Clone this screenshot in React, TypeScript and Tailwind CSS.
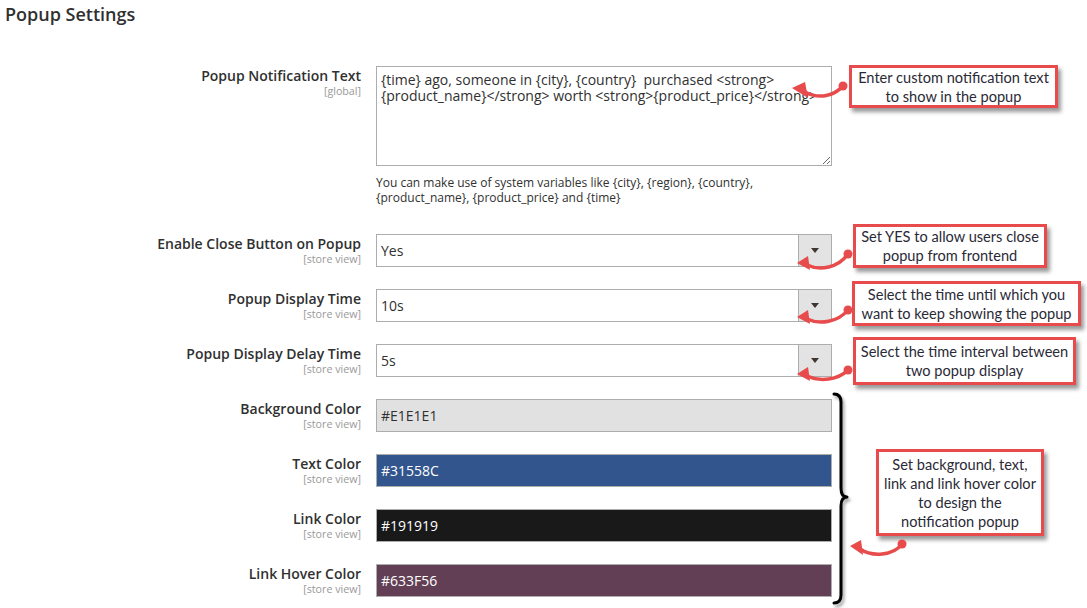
import React from "react";

interface IRowProps {
  title: string;
  scope: string;
  className?: string;
  children: React.ReactNode;
}

const Row: React.FC<IRowProps> = ({ title, scope, className, children }) => {
  return (
    <div className={"flex items-start " + (className ?? "")}>
      <div className="w-[361px] shrink-0 pt-px text-right">
        <div className="text-[14px] leading-[18px] font-semibold text-[#303030]">{title}</div>
        <div className="text-[10.7px] leading-[12px] text-[#999999]">{scope}</div>
      </div>
      <div className="ml-[15px] w-[456px]">{children}</div>
    </div>
  );
};

const Select: React.FC<{ value: string }> = ({ value }) => {
  return (
    <div className="flex h-[33px] w-full border border-[#adadad] bg-white">
      <div className="flex flex-1 items-center pl-[4px] text-[14px] leading-[18px] text-[#303030]">{value}</div>
      <div className="flex w-[33px] items-center justify-center border-l border-[#adadad] bg-[#e3e3e3]">
        <div className="h-0 w-0 border-x-[4px] border-t-[5px] border-x-transparent border-t-[#41362f]" />
      </div>
    </div>
  );
};

const Callout: React.FC<{ className: string; children: React.ReactNode }> = ({ className, children }) => {
  return (
    <div
      className={
        "absolute flex items-center justify-center border-[3px] border-[#e84b4b] bg-white text-center font-['Lato',sans-serif] text-[14.6px] leading-[19px] text-[#2a2a36] shadow-[3px_4px_4px_rgba(0,0,0,0.4)] " +
        className
      }
    >
      <div>{children}</div>
    </div>
  );
};

const RED = "#e84b4b";

const arrows = [
  { tip: "792,88 805,82 808,98", tail: "M805,92 C818,99 833,97 843,86", dot: [843, 86] },
  { tip: "797,263 808,256 810,270", tail: "M807,265 C820,271 838,268 848,254", dot: [848, 254] },
  { tip: "797,317 808,310 810,324", tail: "M807,319 C820,325 838,322 848,310", dot: [848, 310] },
  { tip: "797,374 808,367 810,381", tail: "M807,376 C820,382 838,380 848,370", dot: [848, 370] },
  { tip: "850,546 861,540 863,555", tail: "M860,549 C872,557 893,556 902,544", dot: [902, 544] },
];

export default function App() {
  return (
    <div className="relative h-[608px] w-[1087px] overflow-hidden bg-white font-['Open_Sans',sans-serif] text-[#303030]">
      <h1 className="pl-[5px] pt-[2px] text-[18px] leading-[24px] font-semibold text-[#303030]">Popup Settings</h1>

      <Row title="Popup Notification Text" scope="[global]" className="mt-[40px]">
        <textarea
          readOnly
          className="block h-[100px] w-full border border-[#adadad] px-[4px] pt-[5px] text-[14px] leading-[16px] text-[#303030] outline-none"
          value="{time} ago, someone in {city}, {country}  purchased <strong> {product_name}</strong> worth <strong>{product_price}</strong>"
        />
        <p className="mt-[9px] text-[12px] leading-[15px] text-[#303030]">
          You can make use of system variables like {"{city}"}, {"{region}"}, {"{country}"},
          <br />
          {"{product_name}"}, {"{product_price}"} and {"{time}"}
        </p>
      </Row>

      <Row title="Enable Close Button on Popup" scope="[store view]" className="mt-[29px]">
        <Select value="Yes" />
      </Row>
      <Row title="Popup Display Time" scope="[store view]" className="mt-[22px]">
        <Select value="10s" />
      </Row>
      <Row title="Popup Display Delay Time" scope="[store view]" className="mt-[22px]">
        <Select value="5s" />
      </Row>
      <Row title="Background Color" scope="[store view]" className="mt-[22px]">
        <div className="flex h-[33px] items-center border border-[#adadad] bg-[#E1E1E1] pl-[4px] text-[14px] text-[#303030]">#E1E1E1</div>
      </Row>
      <Row title="Text Color" scope="[store view]" className="mt-[22px]">
        <div className="flex h-[33px] items-center border border-[#adadad] bg-[#31558C] pl-[4px] text-[14px] text-white">#31558C</div>
      </Row>
      <Row title="Link Color" scope="[store view]" className="mt-[22px]">
        <div className="flex h-[33px] items-center border border-[#adadad] bg-[#191919] pl-[4px] text-[14px] text-white">#191919</div>
      </Row>
      <Row title="Link Hover Color" scope="[store view]" className="mt-[22px]">
        <div className="flex h-[33px] items-center border border-[#adadad] bg-[#633F56] pl-[4px] text-[14px] text-white">#633F56</div>
      </Row>

      {/* annotations */}
      <Callout className="left-[849px] top-[65px] h-[43px] w-[209px]">
        Enter custom notification text
        <br />
        to show in the popup
      </Callout>
      <Callout className="left-[853px] top-[224px] h-[44px] w-[194px]">
        Set YES to allow users close
        <br />
        popup from frontend
      </Callout>
      <Callout className="left-[852px] top-[281px] h-[45px] w-[229px]">
        Select the time until which you
        <br />
        want to keep showing the popup
      </Callout>
      <Callout className="left-[853px] top-[337px] h-[48px] w-[223px]">
        Select the time interval between
        <br />
        two popup display
      </Callout>
      <Callout className="left-[876px] top-[449px] h-[87px] w-[168px]">
        Set background, text,
        <br />
        link and link hover color
        <br />
        to design the
        <br />
        notification popup
      </Callout>

      <svg className="pointer-events-none absolute left-0 top-0" width="1087" height="608" viewBox="0 0 1087 608">
        <defs>
          <filter id="brace-shadow" x="-50%" y="-10%" width="200%" height="120%">
            <feDropShadow dx="2" dy="3" stdDeviation="1.5" floodColor="#000" floodOpacity="0.35" />
          </filter>
        </defs>
        <path
          d="M834,394 Q841,394 841,402 L841,488 Q841,497 847,497 Q841,497 841,506 L841,595 Q841,603 834,603"
          fill="none"
          stroke="#000"
          strokeWidth="3"
          strokeLinecap="round"
          strokeLinejoin="round"
          filter="url(#brace-shadow)"
        />
        {arrows.map((a, i) => (
          <g key={i}>
            <path d={a.tail} fill="none" stroke={RED} strokeWidth="3.5" strokeLinecap="round" />
            <polygon points={a.tip} fill={RED} />
            <circle cx={a.dot[0]} cy={a.dot[1]} r="4.5" fill={RED} />
          </g>
        ))}
      </svg>
    </div>
  );
}
